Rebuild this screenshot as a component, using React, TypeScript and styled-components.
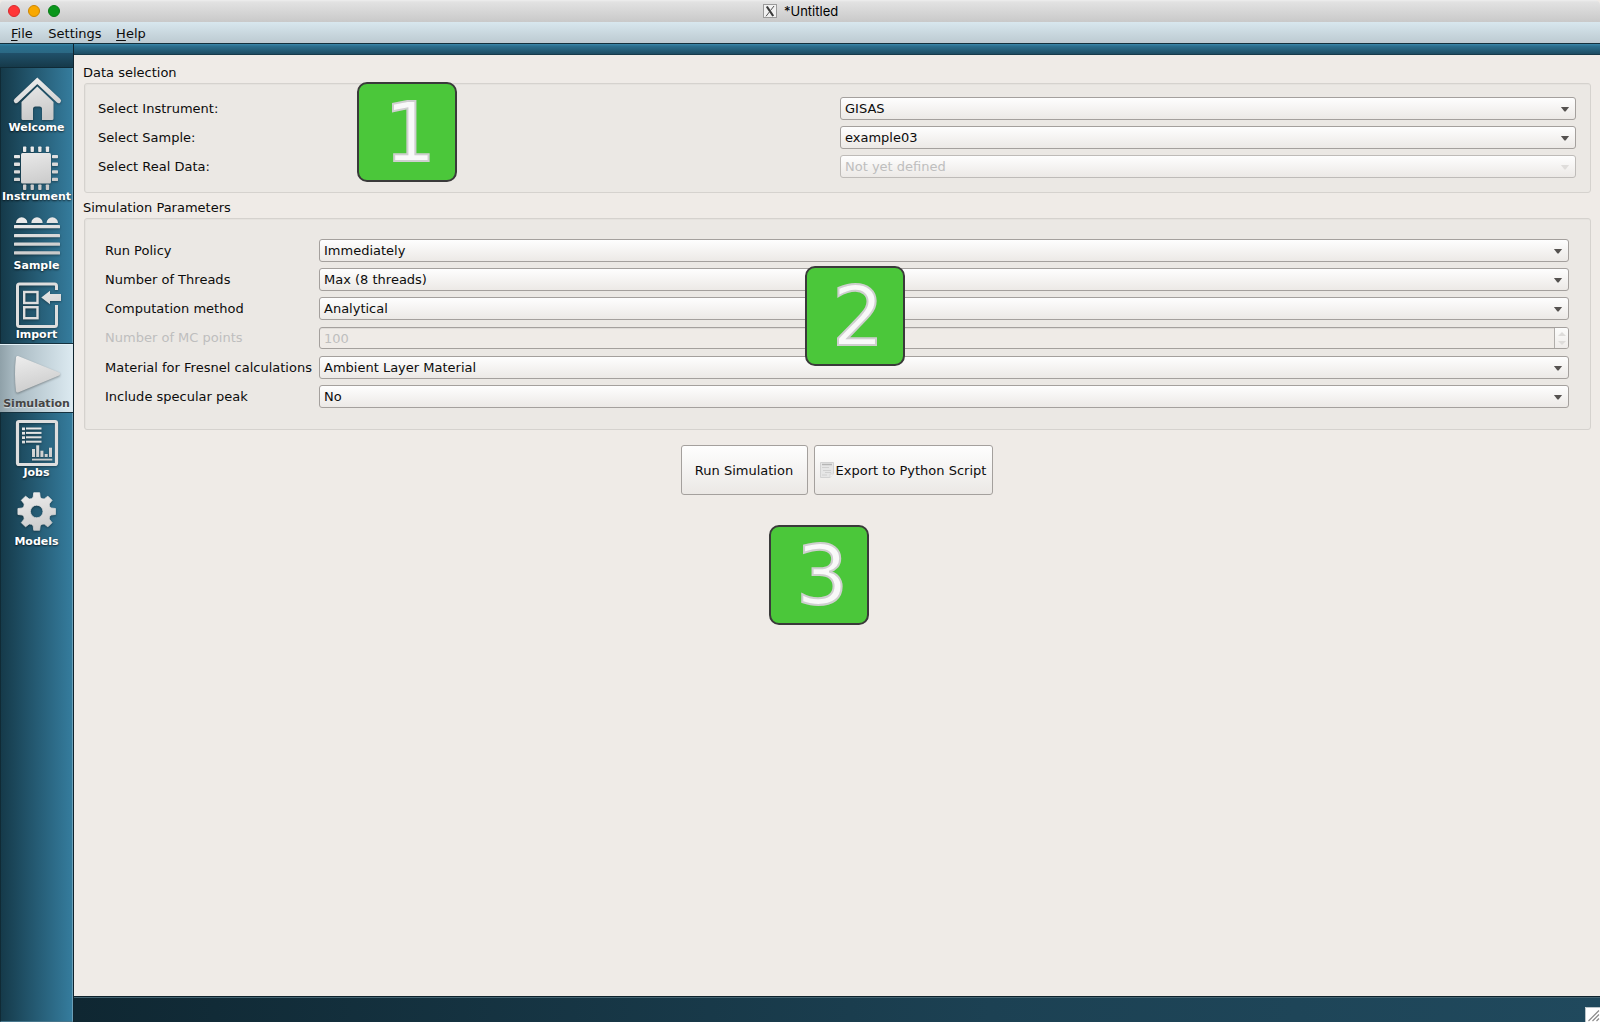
import React from "react";
import styled, { createGlobalStyle, css } from "styled-components";

const GlobalStyle = createGlobalStyle`
  * { box-sizing: border-box; }
  body { margin: 0; background: #efebe7; font-family: "DejaVu Sans", sans-serif; font-size: 13px; color: #0c0c0c; }
`;

const Window = styled.div`
  position: relative;
  display: flex;
  flex-direction: column;
  width: 1600px;
  height: 1022px;
  overflow: hidden;
  background: #efebe7;
`;

const TitleBar = styled.header`
  position: relative;
  display: flex;
  align-items: center;
  height: 22px;
  padding-left: 8px;
  border-radius: 5px 5px 0 0;
  background: linear-gradient(#eeeeee 0, #e2e2e2 2px, #c9c9c9 100%);
`;

const Lights = styled.div`
  display: flex;
  gap: 8px;
  width: 755px;
`;

const Light = styled.span<{ $fill: string; $edge: string }>`
  width: 12px;
  height: 12px;
  border-radius: 50%;
  background: ${(p) => p.$fill};
  border: 1px solid ${(p) => p.$edge};
`;

const TitleText = styled.span`
  margin-left: 7px;
  font: 13px/22px Inter, sans-serif;
  color: #000;
`;

const MenuBar = styled.nav`
  display: flex;
  gap: 15px;
  height: 22px;
  padding-left: 11px;
  line-height: 23px;
  background: linear-gradient(#d8e7ee, #bccad1);
  border-bottom: 1px solid #14303c;
`;

const MenuItem = styled.span`
  &:nth-child(2) { margin: 0 -0.5px 0 0.5px; }
`;

const Mnemonic = styled.span`
  text-decoration: underline;
  text-underline-offset: 2px;
  text-decoration-thickness: 1px;
`;

const Body = styled.div`
  display: flex;
  flex: 1;
  min-height: 0;
`;

const Sidebar = styled.aside`
  display: flex;
  flex-direction: column;
  width: 74px;
  border-right: 1px solid #10242e;
`;

const SideHead = styled.div`
  height: 24px;
  background: linear-gradient(#3483a6 0, #29708f 2px, #2b6884 9px, #20506a 9px, #163a4a 100%);
  border-bottom: 1px solid #0f2a36;
`;

const SideTabs = styled.div`
  flex: 1;
  border-left: 1px solid #102a35;
  border-right: 1px solid #6a9fb8;
  border-bottom: 1px solid #46768c;
  background: linear-gradient(90deg, #153a4a, #357c9d);
`;

const Tab = styled.div<{ $active?: boolean }>`
  height: 69px;
  margin: 0 -1px;
  text-align: center;
  font-weight: bold;
  font-size: 11px;
  line-height: 13px;
  color: #fff;
  text-shadow: 0 1px 2px rgba(0, 0, 0, 0.7);
  ${(p) =>
    p.$active &&
    css`
      color: #454545;
      text-shadow: 0 1px 1px rgba(255, 255, 255, 0.6);
      background: linear-gradient(90deg, #8fa1a9 0, #a9bac2 20%, #dceaf1);
      box-shadow: inset 0 1px #e4f2f8, inset 0 -1px #16323f, 0 -1px #16323f;
    `}
`;

const TabIcon = styled.svg`
  display: block;
  width: 73px;
  height: 53px;
  overflow: visible;
  filter: drop-shadow(0 1px 1px rgba(0, 0, 0, 0.35));
`;

const TabLabel = styled.div`
  width: 73px;
  white-space: nowrap;
`;

const Main = styled.main`
  display: flex;
  flex-direction: column;
  flex: 1;
`;

const TopStrip = styled.div`
  height: 11px;
  background: linear-gradient(#3b88ab 0, #2c708f 2px, #1d4c62 100%);
  border-bottom: 1px solid #163a4a;
`;

const Page = styled.div`
  flex: 1;
  padding: 8px 9px 0 10px;
`;

const GroupTitle = styled.h2`
  margin: 0 0 0 -1px;
  height: 20px;
  font-size: 13px;
  font-weight: normal;
  line-height: 19px;
`;

const Group = styled.section<{ $pad: string; $height: number; $gap: number }>`
  height: ${(p) => p.$height}px;
  padding: ${(p) => p.$pad};
  margin-bottom: ${(p) => p.$gap}px;
  border: 1px solid #d5d2ce;
  border-radius: 3px;
  background: #ebe8e4;
  box-shadow: inset 1px 1px #e5e2de;
`;

const Row = styled.div<{ $label: number; $tall?: boolean }>`
  display: grid;
  grid-template-columns: ${(p) => p.$label}px 1fr;
  height: ${(p) => (p.$tall ? 30 : 29)}px;
`;

const Label = styled.span<{ $disabled?: boolean }>`
  line-height: 24px;
  letter-spacing: 0.01px;
  color: ${(p) => (p.$disabled ? "#bebebe" : "#0c0c0c")};
`;

const fieldFrame = css<{ $disabled?: boolean }>`
  display: flex;
  justify-content: space-between;
  border: 1px solid #a4a09d;
  border-radius: 3px;
  line-height: 21px;
  color: ${(p) => (p.$disabled ? "#bebebe" : "#0c0c0c")};
`;

const Combo = styled.div<{ $disabled?: boolean }>`
  ${fieldFrame}
  align-items: center;
  height: 23px;
  padding: 0 6px 0 4px;
  background: linear-gradient(#fefefe, #ece9e6);
  border-color: ${(p) => (p.$disabled ? "#bebbb8" : "#a4a09d")};
`;

const Arrow = styled.span<{ $disabled?: boolean }>`
  margin: 1px -0.5px 0 0;
  border: 4.5px solid transparent;
  border-width: 5px 4.5px 0;
  width: 9px;
  height: 5px;
  clip-path: polygon(0 0, 100% 0, 56% 100%, 44% 100%);
  background: ${(p) => (p.$disabled ? "#dfdddb" : "#555250")};
`;

const Spin = styled.div<{ $disabled?: boolean }>`
  ${fieldFrame}
  height: 22px;
  margin-top: 1px;
  padding-left: 4px;
  background: #efebe7;
  box-shadow: inset 0 1px #dfdcd8;
`;

const SpinButtons = styled.div`
  display: flex;
  flex-direction: column;
  align-items: center;
  justify-content: center;
  gap: 5px;
  width: 14px;
  border-left: 1px solid #b0adaa;
  border-radius: 0 2px 2px 0;
  background: linear-gradient(#fcfcfb, #efecea);
`;

const Tick = styled.i<{ $up?: boolean }>`
  border: 4px solid transparent;
  ${(p) => (p.$up ? "border-top: 0; border-bottom-color: #dedcda;" : "border-bottom: 0; border-top-color: #dedcda;")}
`;

const Actions = styled.div`
  display: flex;
  justify-content: center;
  gap: 6px;
  padding-right: 2px;
`;

const PushButton = styled.button<{ $width: number }>`
  display: flex;
  align-items: center;
  justify-content: center;
  gap: 2px;
  width: ${(p) => p.$width}px;
  height: 50px;
  padding: 0;
  border: 1px solid #a4a09d;
  border-radius: 3px;
  background: linear-gradient(#fefefe, #ebe8e5);
  color: #0c0c0c;
  font: 13px "DejaVu Sans", sans-serif;
  white-space: nowrap;
`;

const StatusBar = styled.footer`
  display: flex;
  align-items: flex-end;
  justify-content: flex-end;
  height: 26px;
  border-top: 1px solid #0d222c;
  box-shadow: inset 0 1px #446472;
  background: linear-gradient(90deg, #0f2732, #1c4153 60%, #20495d);
`;

const Grip = styled.svg`
  width: 15px;
  height: 15px;
`;

const Marker = styled.div<{ $x: number; $y: number }>`
  position: absolute;
  left: ${(p) => p.$x}px;
  top: ${(p) => p.$y}px;
  width: 100px;
  height: 100px;
  padding-left: 6px;
  border: 2px solid #3a3a3a;
  border-radius: 10px;
  background: #4bc73a;
  color: #f9f9f9;
  font-size: 82px;
  line-height: 98px;
  text-align: center;
  -webkit-text-stroke: 2px #cfcfcf;
`;

const gearPath = (() => {
  const pts: string[] = [];
  for (let i = 0; i < 8; i++) {
    for (const [off, r] of [[-14, 14.6], [-9, 19], [9, 19], [14, 14.6], [22.5, 13.8]]) {
      const a = ((i * 45 + off) * Math.PI) / 180;
      pts.push(`${(36.7 + r * Math.sin(a)).toFixed(2)} ${(29.5 - r * Math.cos(a)).toFixed(2)}`);
    }
  }
  return `M${pts.join("L")}Z M43 29.5a6.3 6.3 0 1 0 -12.6 0a6.3 6.3 0 1 0 12.6 0Z`;
})();

const pins = [0, 1, 2, 3];

const icons: Record<string, React.ReactNode> = {
  Welcome: (
    <>
      <path d="M16.2 32.8L37.3 12.8L58.6 32.8" fill="none" stroke="url(#metal)" strokeWidth="4.8" strokeLinecap="round" />
      <path d="M37.3 18.5L53.5 34V50.5Q53.5 52 52 52H42V41Q42 38.5 39.5 38.5H35.5Q33 38.5 33 41V52H23Q21.5 52 21.5 50.5V34Z" />
    </>
  ),
  Instrument: (
    <>
      <rect x="21" y="16" width="30" height="30.5" rx="1.5" />
      {pins.map((i) => (
        <g key={i}>
          <rect x={23 + i * 7.6} y="9.5" width="3.3" height="5.5" rx="0.7" />
          <rect x={23 + i * 7.6} y="47.5" width="3.3" height="5.5" rx="0.7" />
          <rect x="14" y={18 + i * 7.6} width="6" height="3.3" rx="0.7" />
          <rect x="52" y={18 + i * 7.6} width="6" height="3.3" rx="0.7" />
        </g>
      ))}
    </>
  ),
  Sample: (
    <>
      {[21.7, 37, 52.3].map((x) => (
        <path key={x} d={`M${x - 5.7} 17a5.7 5.7 0 0 1 11.4 0Z`} />
      ))}
      {[19, 28, 36.5, 45.3].map((y) => (
        <rect key={y} x="14" y={y} width="46" height="3.3" rx="0.6" />
      ))}
    </>
  ),
  Import: (
    <>
      <g fill="none" stroke="#dedede">
        <path d="M56.5 15V11Q56.5 9 54.5 9H19.5Q17.5 9 17.5 11V49.5Q17.5 51.5 19.5 51.5H54.5Q56.5 51.5 56.5 49.5V30" strokeWidth="3" />
        <rect x="24.2" y="17" width="13.3" height="11" strokeWidth="2.4" />
        <rect x="24.2" y="32.2" width="13.3" height="11" strokeWidth="2.4" />
      </g>
      <path d="M41.3 22.5L50 15.8V19H61V26H50V29.3Z" />
    </>
  ),
  Simulation: (
    <path d="M17.5 13.5L58.5 30L17.5 47Q15.5 30 17.5 13.5Z" stroke="url(#metal)" strokeWidth="3" strokeLinejoin="round" />
  ),
  Jobs: (
    <>
      <rect x="17.5" y="8.5" width="39" height="43" rx="1.5" fill="none" stroke="#dedede" strokeWidth="3.2" />
      {[14.5, 18.9, 23.3, 27.7].map((y) => (
        <g key={y}>
          <rect x="22" y={y} width="3" height="2.7" />
          <rect x="26" y={y} width="15.5" height="2" />
        </g>
      ))}
      {[[32, 36], [36.2, 32.3], [40.4, 37.7], [44.7, 41], [49, 34.7]].map(([x, y]) => (
        <rect key={x} x={x} y={y} width="3" height={44 - y} />
      ))}
      <rect x="32" y="45.7" width="20.3" height="1.8" />
    </>
  ),
  Models: <path d={gearPath} fillRule="evenodd" stroke="url(#metal)" strokeWidth="0.8" strokeLinejoin="round" />,
};

const dataRows = [
  { label: "Select Instrument:", value: "GISAS" },
  { label: "Select Sample:", value: "example03" },
  { label: "Select Real Data:", value: "Not yet defined", disabled: true },
];

const simRows = [
  { label: "Run Policy", value: "Immediately" },
  { label: "Number of Threads", value: "Max (8 threads)" },
  { label: "Computation method", value: "Analytical" },
  { label: "Number of MC points", value: "100", spin: true },
  { label: "Material for Fresnel calculations", value: "Ambient Layer Material" },
  { label: "Include specular peak", value: "No" },
];

export default function App() {
  return (
    <Window>
      <GlobalStyle />
      <TitleBar>
        <Lights>
          <Light $fill="#ff3637" $edge="#d82a2d" />
          <Light $fill="#f9a800" $edge="#ce8500" />
          <Light $fill="#0a961b" $edge="#087b16" />
        </Lights>
        <svg width="14" height="14" viewBox="0 0 14 14">
          <rect x="0.5" y="0.5" width="13" height="13" fill="#f1f1f1" stroke="#9a9a9a" />
          <path d="M3.8 2.5L10.2 12" stroke="#3a3a3a" strokeWidth="2.2" />
          <path d="M11 2L3 12.3" stroke="#555" strokeWidth="1" />
        </svg>
        <TitleText>*Untitled</TitleText>
      </TitleBar>
      <MenuBar>
        <MenuItem><Mnemonic>F</Mnemonic>ile</MenuItem>
        <MenuItem>Settings</MenuItem>
        <MenuItem><Mnemonic>H</Mnemonic>elp</MenuItem>
      </MenuBar>
      <Body>
        <Sidebar>
          <SideHead />
          <SideTabs>
            {Object.keys(icons).map((name) => (
              <Tab key={name} $active={name === "Simulation"}>
                <TabIcon viewBox="0 0 73 53" fill="url(#metal)">
                  <defs>
                    <linearGradient id="metal" gradientUnits="userSpaceOnUse" x1="20" y1="8" x2="30" y2="53">
                      <stop offset="0" stopColor="#f0f0f0" />
                      <stop offset="1" stopColor="#c9c9c9" />
                    </linearGradient>
                  </defs>
                  {icons[name]}
                </TabIcon>
                <TabLabel>{name}</TabLabel>
              </Tab>
            ))}
          </SideTabs>
        </Sidebar>
        <Main>
          <TopStrip />
          <Page>
            <GroupTitle>Data selection</GroupTitle>
            <Group $height={110} $gap={5} $pad="13px 14px 0 13px">
              {dataRows.map((r) => (
                <Row key={r.label} $label={742}>
                  <Label>{r.label}</Label>
                  <Combo $disabled={r.disabled}>
                    {r.value}
                    <Arrow $disabled={r.disabled} />
                  </Combo>
                </Row>
              ))}
            </Group>
            <GroupTitle>Simulation Parameters</GroupTitle>
            <Group $height={212} $gap={15} $pad="20px 21px 0 20px">
              {simRows.map((r) => (
                <Row key={r.label} $label={214} $tall={r.spin}>
                  <Label $disabled={r.spin}>{r.label}</Label>
                  {r.spin ? (
                    <Spin $disabled>
                      {r.value}
                      <SpinButtons>
                        <Tick $up />
                        <Tick />
                      </SpinButtons>
                    </Spin>
                  ) : (
                    <Combo>
                      {r.value}
                      <Arrow />
                    </Combo>
                  )}
                </Row>
              ))}
            </Group>
            <Actions>
              <PushButton $width={127}>Run Simulation</PushButton>
              <PushButton $width={179}>
                <svg width="14" height="16" viewBox="0 0 14 16">
                  <path d="M0.5 0.5H13.5V11.5L10 15.5H0.5Z" fill="#e6e6e6" stroke="#d2d2d2" />
                  <path d="M2 2.5H12" stroke="#b5b5b5" strokeWidth="1.5" />
                  <path d="M2 5.5H9M3 8.5H11M5 10.5H11M2 13H7" stroke="#d0d0d0" />
                  <path d="M10 15.5V12H13.5" fill="#f4f4f4" stroke="#d8d8d8" />
                </svg>
                Export to Python Script
              </PushButton>
            </Actions>
          </Page>
          <StatusBar>
            <Grip viewBox="0 0 15 15">
              <rect width="15" height="15" fill="#fff" />
              <path d="M0.5 15V0.5H15" fill="none" stroke="#b9c4c9" />
              <path d="M3.5 14L14 3.5M7.5 14L14 7.5M11.5 14L14 11.5" stroke="#8a8a8a" strokeWidth="1.2" />
            </Grip>
          </StatusBar>
        </Main>
      </Body>
      <Marker $x={357} $y={82}>1</Marker>
      <Marker $x={805} $y={266}>2</Marker>
      <Marker $x={769} $y={525}>3</Marker>
    </Window>
  );
}
